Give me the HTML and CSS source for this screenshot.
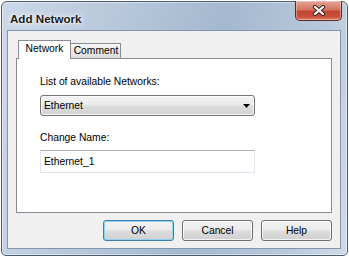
FILE: index.html
```html
<!DOCTYPE html>
<html lang="en">
<head>
    <meta charset="UTF-8">
    <title>Add Network</title>
    <link rel="stylesheet" href="styles.css">
</head>
<body>
    <div class="ventana">
        <div class="titulo-barra">
            <span class="titulo">Add Network</span>
            <button class="cerrar" type="button">
                <svg width="14" height="11" viewBox="0 0 14 11">
                    <path d="M3 2 L11 9 M11 2 L3 9" stroke="#3a2420" stroke-width="4.2" stroke-linecap="round"/>
                    <path d="M3 2 L11 9 M11 2 L3 9" stroke="#fff" stroke-width="2.2" stroke-linecap="round"/>
                </svg>
            </button>
        </div>
        <div class="cliente">
            <div class="pestanas">
                <div class="pestana activa">Network</div>
                <div class="pestana">Comment</div>
            </div>
            <div class="panel">
                <div class="etiqueta">List of available Networks:</div>
                <div class="combo">
                    <span>Ethernet</span>
                    <svg class="flecha" width="7" height="4" viewBox="0 0 7 4"><polygon points="0,0 7,0 3.5,4" fill="#000"/></svg>
                </div>
                <div class="etiqueta segunda">Change Name:</div>
                <div class="caja">Ethernet_1</div>
            </div>
            <div class="botones">
                <button class="boton defecto" type="button">OK</button>
                <button class="boton" type="button">Cancel</button>
                <button class="boton" type="button">Help</button>
            </div>
        </div>
    </div>
</body>
</html>
```

FILE: styles.css
```css
body {
    margin: 0;
    background: #fff;
    font-family: 'Liberation Sans', Arial, sans-serif;
    font-size: 10.3px;
    color: #000;
}
.ventana {
    width: 347px;
    height: 255px;
    margin: 1px;
    box-sizing: border-box;
    border: 1px solid #4d5d70;
    border-radius: 6px 6px 5px 5px;
    background: linear-gradient(100deg, #cbd8e7 0%, #b7c8db 30%, #a4b8cf 58%, #b6c7da 82%, #cfdbe8 100%);
    box-shadow: inset 0 0 0 1px rgba(255,255,255,0.45);
    display: flex;
    flex-direction: column;
}
.titulo-barra {
    height: 28px;
    display: flex;
    align-items: flex-start;
}
.titulo {
    margin: 10px 0 0 8px;
    font-size: 11.6px;
    font-weight: bold;
    color: #1b1b1b;
    text-shadow: 0 0 6px #fff, 0 0 3px #fff;
}
.cerrar {
    margin: -1px 5px 0 auto;
    width: 47px;
    height: 20px;
    padding: 0;
    border: 1px solid #5b2a24;
    border-top: none;
    border-radius: 0 0 5px 5px;
    background: linear-gradient(#e2a597 0%, #d47563 45%, #c24634 55%, #c9523d 85%, #dc8a72 100%);
    box-shadow: inset 0 0 0 1px rgba(255,220,210,0.45);
    display: flex;
    align-items: center;
    justify-content: center;
}
.cliente {
    margin: 0 6px 0 5px;
    height: 219px;
    box-sizing: border-box;
    border: 1px solid #8195ab;
    background: #f0f0f0;
    padding: 9px 8px 0 8px;
    display: flex;
    flex-direction: column;
}
.pestanas {
    height: 18px;
    display: flex;
    align-items: flex-end;
    padding-left: 2px;
}
.pestana {
    box-sizing: border-box;
    height: 15px;
    width: 51px;
    margin-left: -1px;
    border: 1px solid #898c95;
    border-bottom: none;
    background: linear-gradient(#f7f7f7, #e8e8e8 50%, #dcdcdc);
    text-align: center;
    line-height: 13px;
    padding-left: 1px;
}
.pestana.activa {
    width: 53px;
    height: 19px;
    margin-left: 0;
    margin-bottom: -1px;
    background: #fff;
    position: relative;
    z-index: 1;
    line-height: 15px;
    padding-left: 0;
}
.panel {
    height: 155px;
    box-sizing: border-box;
    border: 1px solid #898c95;
    background: #fff;
    padding: 16px 0 0 23px;
}
.etiqueta {
    line-height: 13px;
    margin-bottom: 7px;
}
.etiqueta.segunda {
    margin-top: 15px;
    margin-bottom: 6px;
}
.combo {
    width: 215px;
    height: 21px;
    box-sizing: border-box;
    border: 1px solid #767676;
    border-radius: 3px;
    background: linear-gradient(#f3f3f3 0%, #ebebeb 48%, #dddddd 52%, #d2d2d2 100%);
    box-shadow: inset 0 0 0 1px rgba(255,255,255,0.7);
    display: flex;
    align-items: center;
    justify-content: space-between;
    padding: 0 4px 0 3px;
}
.flecha {
    display: block;
}
.caja {
    width: 215px;
    height: 23px;
    box-sizing: border-box;
    border: 1px solid #dfe5ec;
    border-top-color: #abadb3;
    background: #fff;
    padding-left: 3px;
    line-height: 21px;
}
.botones {
    margin-top: 7px;
    display: flex;
    justify-content: flex-end;
    gap: 8px;
}
.boton {
    width: 71px;
    height: 21px;
    padding: 0;
    font-family: inherit;
    font-size: 10.3px;
    color: #000;
    border: 1px solid #707070;
    border-radius: 3px;
    background: linear-gradient(#f2f2f2 0%, #ebebeb 48%, #dddddd 52%, #cfcfcf 100%);
    box-shadow: inset 0 0 0 1px rgba(255,255,255,0.75);
}
.boton.defecto {
    border-color: #3c7fb1;
    box-shadow: inset 0 0 0 1px #8fd3f3;
}
```
